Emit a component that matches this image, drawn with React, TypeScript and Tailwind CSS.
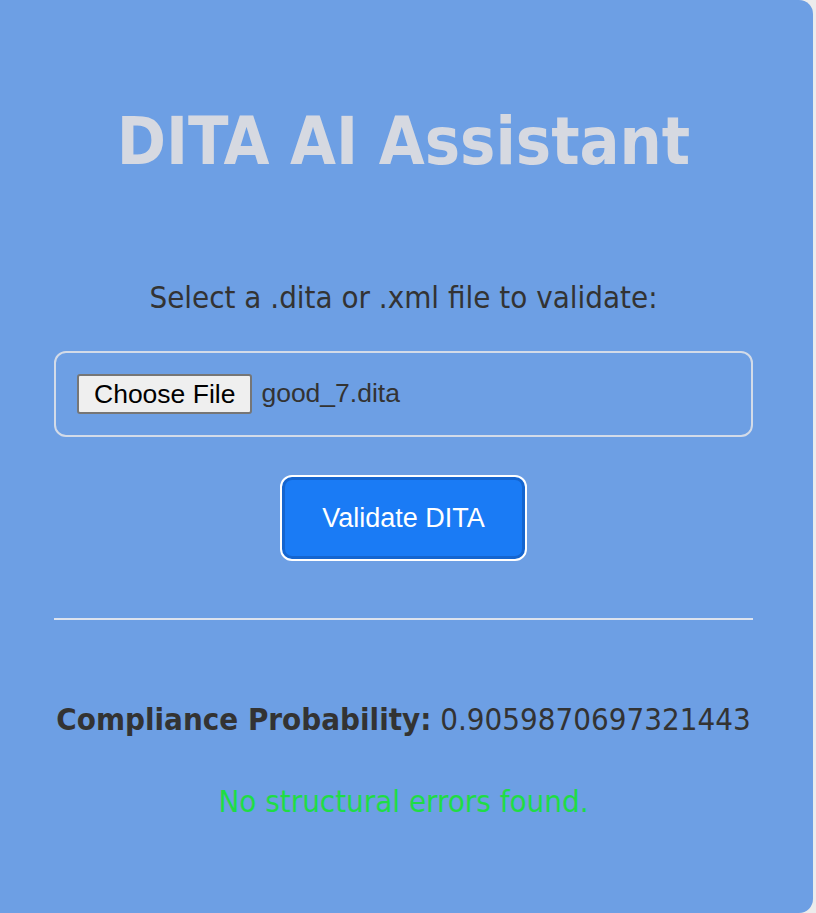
export default function App() {
  return (
    <div className="min-h-[913px] w-[816px] bg-[#ececec]">
      <div className="flex h-[913px] w-[813px] flex-col items-stretch rounded-r-[14px] bg-[#6d9fe4] pl-[54px] pr-[60px] font-['DejaVu_Sans_Condensed','DejaVu_Sans',sans-serif] text-[#333]">
        <h1 className="mt-[104px] text-center text-[66px] font-bold leading-[76px] text-[#d6d9e1]">
          DITA AI Assistant
        </h1>

        <p className="mt-[97px] text-center text-[31px] leading-[40px]">
          Select a .dita or .xml file to validate:
        </p>

        <div className="mt-[34px] flex h-[86px] items-center rounded-[12px] border-2 border-[#d3dbe8] px-[21px]">
          <span className="rounded-[3px] border-2 border-[#767676] bg-[#efefef] px-[15px] py-[3px] font-['Liberation_Sans',Arial,sans-serif] text-[26.5px] leading-[30px] text-black">
            Choose File
          </span>
          <span className="ml-[9px] font-['Liberation_Sans',Arial,sans-serif] text-[26.5px] text-[#333]">
            good_7.dita
          </span>
        </div>

        <div className="mt-[38px] flex justify-center">
          <button
            type="button"
            className="h-[86px] w-[247px] rounded-[12px] border-2 border-white bg-[#1a7bf5] font-['Liberation_Sans',Arial,sans-serif] text-[27px] text-white shadow-[inset_0_0_0_3px_#1565cf]"
          >
            Validate DITA
          </button>
        </div>

        <hr className="mt-[57px] border-0 border-t-2 border-[#dde3ee]" />

        <p className="mt-[79px] text-center text-[31px] leading-[40px]">
          <span className="font-bold">Compliance Probability:</span> 0.9059870697321443
        </p>

        <p className="mt-[42px] text-center text-[31px] leading-[40px] text-[#1fdc45]">
          No structural errors found.
        </p>
      </div>
    </div>
  );
}
